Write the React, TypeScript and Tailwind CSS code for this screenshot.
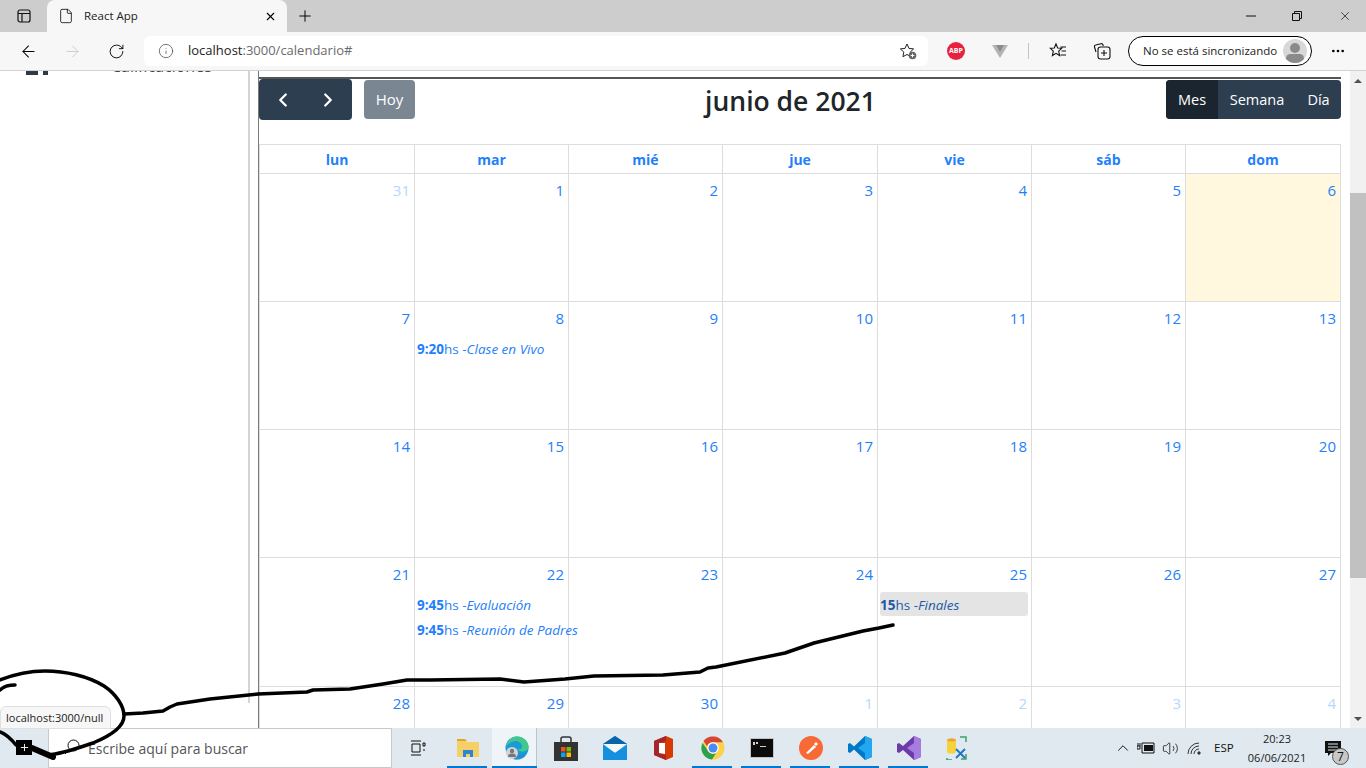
import { ArrowLeft, ArrowRight, ChevronLeft, ChevronRight, ChevronUp, File, Info, MoreHorizontal, Plus, RotateCw, Volume2, X } from 'lucide-react';

const font = { fontFamily: '"Open Sans", "Noto Sans", sans-serif' };

type Ev = { time: string; title: string; grey?: boolean };
type Day = { n: number; muted?: boolean; today?: boolean; events?: Ev[] };

const weeks: Day[][] = [
  [{ n: 31, muted: true }, { n: 1 }, { n: 2 }, { n: 3 }, { n: 4 }, { n: 5 }, { n: 6, today: true }],
  [{ n: 7 }, { n: 8, events: [{ time: '9:20', title: 'Clase en Vivo' }] }, { n: 9 }, { n: 10 }, { n: 11 }, { n: 12 }, { n: 13 }],
  [{ n: 14 }, { n: 15 }, { n: 16 }, { n: 17 }, { n: 18 }, { n: 19 }, { n: 20 }],
  [
    { n: 21 },
    { n: 22, events: [{ time: '9:45', title: 'Evaluación' }, { time: '9:45', title: 'Reunión de Padres' }] },
    { n: 23 },
    { n: 24 },
    { n: 25, events: [{ time: '15', title: 'Finales', grey: true }] },
    { n: 26 },
    { n: 27 },
  ],
  [{ n: 28 }, { n: 29 }, { n: 30 }, { n: 1, muted: true }, { n: 2, muted: true }, { n: 3, muted: true }, { n: 4, muted: true }],
];

const dayNames = ['lun', 'mar', 'mié', 'jue', 'vie', 'sáb', 'dom'];

const BrowserBar = () => (
  <div className="shrink-0 relative z-10">
    <div className="h-8 bg-[#cdcdcd] flex items-center">
      <div className="w-[47px] flex justify-center">
        <svg width="16" height="16" viewBox="0 0 16 16" fill="none" stroke="#111" strokeWidth="1.2">
          <rect x="2" y="2" width="12" height="12" rx="2" />
          <path d="M2 5.5h12M6 5.5V14" />
        </svg>
      </div>
      <div className="w-[240px] h-8 bg-[#f7f7f7] rounded-t-lg flex items-center pl-[11px] pr-[2px]">
        <File size={16} strokeWidth={1.2} className="text-black" />
        <span className="ml-[10px] text-[11.5px] text-[#222]">React App</span>
        <X size={13} strokeWidth={2} className="ml-auto mr-[8px] text-black" />
      </div>
      <Plus size={18} strokeWidth={1.3} className="ml-[9px] text-black" />
      <div className="ml-auto flex items-center text-black">
        <svg width="12" height="12" viewBox="0 0 12 12" className="mr-[34px]" stroke="#111">
          <path d="M1 6h10" />
        </svg>
        <svg width="12" height="12" viewBox="0 0 12 12" className="mr-[35px]" fill="none" stroke="#111">
          <path d="M1.5 3.5h7v7h-7zM3.5 3.5v-2h7v7h-2" />
        </svg>
        <X size={14} strokeWidth={1.1} className="mr-[14px]" />
      </div>
    </div>
    <div className="h-[39px] bg-[#f7f7f7] border-b border-[#d2d2d2] flex items-center">
      <ArrowLeft size={19} strokeWidth={1.3} className="ml-[19px] text-black" />
      <ArrowRight size={19} strokeWidth={1.1} className="ml-[25px] text-[#c8c8c8]" />
      <RotateCw size={17} strokeWidth={1.3} className="ml-[26px] text-black" />
      <div className="ml-[19px] w-[784px] h-[30px] bg-white rounded-md flex items-center">
        <Info size={16} strokeWidth={1.2} className="ml-[14px] text-[#555]" />
        <span className="ml-[14px] text-[13px] text-[#222]">
          localhost<span className="text-[#6b6b6b]">:3000/calendario#</span>
        </span>
        <svg width="18" height="18" viewBox="0 0 18 18" className="ml-auto mr-[11px]" fill="none" stroke="#222" strokeWidth="1">
          <path d="M8 2l2 4.4 4.6.5-3.4 3.2.9 4.6L8 12.5l-4.1 2.2.9-4.6L1.4 6.9 6 6.400z" />
          <circle cx="13.500" cy="13.500" r="3.800" fill="#666" stroke="none" />
          <path d="M11.700 13.500h3.600M13.500 11.700v3.600" stroke="#fff" />
        </svg>
      </div>
      <div className="ml-[19px] w-[18px] h-[18px] rounded-full bg-[#e8223e] flex items-center justify-center text-white font-bold text-[7px]">ABP</div>
      <svg width="16" height="16" viewBox="0 0 16 16" className="ml-[27px]">
        <path d="M0 2h16L8 15z" fill="#b4b4b4" />
        <path d="M4 2h8L8 9z" fill="#8c8c8c" />
      </svg>
      <div className="ml-[20px] w-[1px] h-[16px] bg-[#c4c4c4]" />
      <svg width="18" height="18" viewBox="0 0 18 18" className="ml-[20px]" fill="none" stroke="#111" strokeWidth="1.1">
        <path d="M7 2l1.700 4 4 .3-3 2.900.9 4.300L7 11.300l-3.600 2.200.9-4.300-3-2.900 4-.3zM11.500 5H17M12.500 9H17M11.500 13H17" />
      </svg>
      <svg width="18" height="18" viewBox="0 0 18 18" className="ml-[26px]" fill="none" stroke="#111" strokeWidth="1.1">
        <path d="M3 10L1.500 5c-.3-1 .2-1.800 1.200-2L8 1.700c1-.2 1.700.3 2 1.200l.3 1.100" />
        <rect x="5" y="5" width="12" height="12" rx="2.500" />
        <path d="M11 8v6M8 11h6" />
      </svg>
      <div className="ml-[17px] w-[184px] h-[30px] rounded-full border border-black flex items-center pl-[14px] pr-[4px] bg-white">
        <span className="text-[11.5px] text-[#222] whitespace-nowrap">No se está sincronizando</span>
        <div className="ml-auto w-[24px] h-[24px] rounded-full bg-[#d8d8d8] overflow-hidden flex flex-col items-center pt-[4px]">
          <div className="w-[10px] h-[10px] rounded-full bg-[#8a8a8a]" />
          <div className="w-[18px] h-[10px] rounded-full bg-[#8a8a8a] mt-[1px]" />
        </div>
      </div>
      <MoreHorizontal size={16} className="ml-[18px] text-black" />
    </div>
  </div>
);

const DayCell = ({ day }: { day: Day }) => (
  <div className={`min-w-0 border-r border-[#dddddd] ${day.today ? 'bg-[#fff8de]' : ''}`}>
    <div className={`text-right pr-[4px] pt-[5px] text-[15px] leading-[22px] ${day.muted ? 'text-[#b3d7ff]' : 'text-[#1f80fb]'}`}>{day.n}</div>
    {day.events ? (
      <div className="mt-[7px] flex flex-col gap-[1px] pl-[2px] pr-[3px]">
        {day.events.map((ev) => (
          <div
            key={ev.title}
            className={`h-[24px] pt-[2px] flex items-center rounded-[3px] text-[13.5px] whitespace-nowrap ${ev.grey ? 'bg-[#e4e4e4] text-[#1d5aa8]' : 'text-[#1f80fb]'}`}
          >
            <b>{ev.time}</b>hs -<i>{ev.title}</i>
          </div>
        ))}
      </div>
    ) : null}
  </div>
);

const Calendar = () => (
  <div className="flex-1 min-w-0 overflow-hidden">
    <div className="mt-[6px] w-[1082px] h-[2px] bg-[#555]" />
    <div className="w-[1082px] flex items-center h-[41px]">
      <div className="w-[93px] h-[41px] bg-[#2c3e50] rounded flex items-center justify-around px-[2px] text-white">
        <ChevronLeft size={22} strokeWidth={2.500} />
        <ChevronRight size={22} strokeWidth={2.500} />
      </div>
      <div className="ml-[12px] w-[51px] h-[39px] bg-[#7a8691] rounded flex items-center justify-center text-white text-[15px]">Hoy</div>
      <div className="flex-1 pt-[4px] text-center text-[26.500px] font-semibold text-[#212529]">junio de 2021</div>
      <div className="h-[39px] bg-[#2c3e50] rounded flex items-center text-white text-[14.500px] overflow-hidden">
        <span className="h-full w-[52px] flex items-center justify-center bg-[#1a252f]">Mes</span>
        <span className="w-[78px] text-center">Semana</span>
        <span className="w-[45px] text-center">Día</span>
      </div>
    </div>
    <div className="mt-[24px] w-[1082px] border-l border-t border-[#dddddd]">
      <div className="grid grid-cols-[155px_154px_154px_155px_154px_154px_155px] h-[29px] border-b border-[#dddddd]">
        {dayNames.map((d) => (
          <div key={d} className="border-r border-[#dddddd] text-center text-[14px] font-bold text-[#1f80fb] leading-[29px]">{d}</div>
        ))}
      </div>
      {weeks.map((week, i) => (
        <div key={i} className={`grid grid-cols-[155px_154px_154px_155px_154px_154px_155px] border-b border-[#dddddd] ${i === 3 ? 'h-[129px]' : 'h-[128px]'}`}>
          {week.map((day, j) => (
            <DayCell key={j} day={day} />
          ))}
        </div>
      ))}
    </div>
  </div>
);

const Scrollbar = () => (
  <div className="w-[16px] shrink-0 bg-[#f1f1f1] flex flex-col items-center relative">
    <div className="mt-[8px] w-0 h-0 border-x-[4px] border-x-transparent border-b-[4px] border-b-[#505050]" />
    <div className="absolute top-[122px] left-0 w-[16px] h-[385px] bg-[#c1c1c1]" />
    <div className="mt-auto mb-[7px] w-0 h-0 border-x-[4px] border-x-transparent border-t-[4px] border-t-[#505050]" />
  </div>
);

const Sidebar = () => (
  <div className="w-[259px] shrink-0 flex overflow-hidden">
    <div className="w-[248px] h-[632px] border-r-2 border-[#d4d4d4] box-content -mr-[2px]">
      <div className="flex items-start -mt-[12px] ml-[26px]">
        <div className="w-[22px] h-[16px] flex gap-[5px]">
          <div className="w-[12px] bg-[#2f3a45]" />
          <div className="w-[5px] bg-[#2f3a45]" />
        </div>
        <span className="ml-[63px] text-[16px] text-[#444] leading-[15px] whitespace-nowrap">Calificaciones</span>
      </div>
    </div>
    <div className="ml-auto w-[1px] bg-[#7a7a7a]" />
  </div>
);

const Underlined = ({ on, active, children }: { on?: boolean; active?: boolean; children: React.ReactNode }) => (
  <div className="w-[49px] h-full flex items-center justify-center relative">
    {active ? <div className="absolute inset-y-0 left-0 right-[4px] bg-[#eef4f7] border-r border-[#b9c4cb]" /> : null}
    <div className="relative flex">{children}</div>
    {on ? <div className={`absolute bottom-0 h-[2px] bg-[#0078d4] ${active ? 'left-0 right-[4px]' : 'left-[4px] right-[5px]'}`} /> : null}
  </div>
);

const Taskbar = () => (
  <div className="h-[40px] shrink-0 bg-[#dfe9ef] flex items-center relative z-10">
    <div className="w-[48px] h-full flex items-center justify-center">
      <svg width="16" height="16" viewBox="0 0 16 16">
        <path d="M1 1h6.500v6.500H1zM8.500 1H15v6.500H8.500zM1 8.500h6.500V15H1zM8.500 8.500H15V15H8.500z" fill="#111" />
      </svg>
    </div>
    <div className="w-[344px] h-full bg-white border border-[#c8c8c8] flex items-center pl-[15px]">
      <svg width="16" height="16" viewBox="0 0 16 16" fill="none" stroke="#111" className="-mt-[3px]">
        <circle cx="9.500" cy="6.500" r="5.500" />
        <path d="M5.500 10.500 1 15" />
      </svg>
      <span className="ml-[8px] text-[14px] text-[#555]">Escribe aquí para buscar</span>
    </div>
    <div className="w-[51px] flex justify-center">
      <svg width="16" height="16" viewBox="0 0 16 16" fill="none" stroke="#111">
        <path d="M1 1h10M1 15h10M2 4h8v8H2zM13 3h2v3h-2zM13 10h2" />
      </svg>
    </div>
    <Underlined on>
      <svg width="22" height="20" viewBox="0 0 22 20">
        <path d="M0 2h8l2 2h12v15H0z" fill="#f5d066" />
        <path d="M0 1h8l2 2H0z" fill="#e0a81e" />
        <path d="M6 12h10v7h-3v-3H9v3H6z" fill="#2b86d4" />
      </svg>
    </Underlined>
    <Underlined on active>
      <svg width="24" height="24" viewBox="0 0 24 24">
        <circle cx="12" cy="12" r="11.500" fill="#1a9ad8" />
        <path d="M12 .5c6 0 11.500 4.500 11.500 10.500 0 3-3 4.500-6 4.500-2 0-4-.5-5-2 3 0 4.500-1 4.500-3 0-3-3-5.500-6-5.500-4 0-8.500 3-10.500 6C2 5 6.500.5 12 .5z" fill="#42c88c" />
        <path d="M21 17c-2.500 5-8 7-12 6l2-5c3 1.500 7 1 10-1z" fill="#2b8ad0" />
        <circle cx="7" cy="17" r="6" fill="#d4d4d4" />
        <circle cx="7" cy="15" r="2.200" fill="#777" />
        <path d="M3 21c0-3 2-3.500 4-3.500s4 .5 4 3.500z" fill="#777" />
      </svg>
    </Underlined>
    <Underlined>
      <svg width="24" height="25" viewBox="0 0 24 25">
        <path d="M7 7V3a2 2 0 0 1 2-2h6a2 2 0 0 1 2 2v4" fill="none" stroke="#333" strokeWidth="1.500" />
        <path d="M0 6h24v19H0z" fill="#333" />
        <path d="M7 11h4.500v4.500H7z" fill="#f25022" />
        <path d="M12.500 11H17v4.500h-4.500z" fill="#7fba00" />
        <path d="M7 16.500h4.500V21H7z" fill="#00a4ef" />
        <path d="M12.500 16.500H17V21h-4.500z" fill="#ffb900" />
      </svg>
    </Underlined>
    <Underlined>
      <svg width="24" height="24" viewBox="0 0 24 24">
        <path d="M0 8l12-8 12 8v16H0z" fill="#28a8ea" />
        <path d="M0 8l12-8 12 8-12 8z" fill="#0a64a8" />
        <path d="M0 8h24l-12 9z" fill="#f4f8fa" />
        <path d="M0 24V9l12 8 12-8v15z" fill="#1490df" />
      </svg>
    </Underlined>
    <Underlined>
      <svg width="20" height="24" viewBox="0 0 20 24">
        <path d="M0 5l12-5 7 3v18l-7 3-12-5z" fill="#d83b01" />
        <path d="M0 5l12-5v5L5 7v10l7 2v5L0 19z" fill="#a4262c" />
        <path d="M5 7h6v11L5 17z" fill="#fff" />
      </svg>
    </Underlined>
    <Underlined on>
      <svg width="24" height="24" viewBox="0 0 24 24">
        <circle cx="12" cy="12" r="11.500" fill="#fbd34a" />
        <path d="M12 .5a11.500 11.500 0 0 1 10 5.800H12a6 6 0 0 0-6 4L2.500 5A11.500 11.500 0 0 1 12 .5z" fill="#d94438" />
        <path d="M1.500 7A11.500 11.500 0 0 0 11 23.500l4-6.500a6 6 0 0 1-8.500-3z" fill="#2e9e4f" />
        <circle cx="12" cy="12" r="5.800" fill="#fff" />
        <circle cx="12" cy="12" r="4.500" fill="#4a8bf0" />
      </svg>
    </Underlined>
    <Underlined on>
      <svg width="24" height="20" viewBox="0 0 24 20">
        <path d="M0 0h24v20H0z" fill="#c4c4c4" />
        <path d="M1 1h22v18H1z" fill="#0c0c0c" />
        <path d="M3 4h2v3H3zM6 4h2v2H6zM10 8h6v1h-6z" fill="#cfcfcf" />
      </svg>
    </Underlined>
    <Underlined on>
      <svg width="24" height="24" viewBox="0 0 24 24">
        <circle cx="12" cy="12" r="12" fill="#f76935" />
        <path d="M7 17l8-8 2 2-8 7zM15 8l2-2 2 2-2 2z" fill="#fff" />
      </svg>
    </Underlined>
    <Underlined on>
      <svg width="24" height="24" viewBox="0 0 24 24">
        <path d="M17 0l7 3v18l-7 3L6 13.500 2 17l-2-1V8l2-1 4 3.500z" fill="#0078c8" />
        <path d="M17 0l7 3v18l-7 3zM17 7l-7 5 7 5z" fill="#22a7f0" />
      </svg>
    </Underlined>
    <Underlined on>
      <svg width="24" height="24" viewBox="0 0 24 24">
        <path d="M17 0l7 3v18l-7 3L6 14 2 17l-2-1V8l2-1 4 3z" fill="#6d3ba8" />
        <path d="M17 0l7 3v18l-7 3zM17 7l-7 5 7 5z" fill="#a67cde" />
      </svg>
    </Underlined>
    <Underlined>
      <svg width="24" height="24" viewBox="0 0 24 24">
        <path d="M1 4c0-2 9-2 9 0v12c0 2-9 2-9 0z" fill="#f6d33c" />
        <path d="M1 4c0-2 9-2 9 0s-9 2-9 0z" fill="#e9a43c" />
        <path d="M14 1h6v5M1 22v2h5M20 18v5h-5" fill="none" stroke="#38a169" strokeWidth="1.500" />
        <path d="M10 13l9 9M19 13l-9 9" stroke="#2276c8" strokeWidth="2" />
      </svg>
    </Underlined>
    <div className="ml-auto flex items-center h-full text-[#111] mr-[25px]">
      <ChevronUp size={18} strokeWidth={1.300} />
      <svg width="18" height="12" viewBox="0 0 18 12" className="ml-[5px]">
        <path d="M5 1h12v10H5zM0 4h3v3H0zM1 1v3M3 1v3" fill="none" stroke="#111" />
        <path d="M7 3h9v6H7z" fill="#111" />
      </svg>
      <Volume2 size={17} strokeWidth={1.100} className="ml-[7px]" />
      <svg width="16" height="14" viewBox="0 0 16 14" className="ml-[8px]" fill="none" stroke="#333">
        <path d="M1 13a11 11 0 0 1 11-11M4 13a8 8 0 0 1 8-8M7 13a5 5 0 0 1 5-5" />
        <circle cx="12" cy="12" r="1.200" fill="#333" />
      </svg>
      <span className="ml-[11px] text-[11.5px] w-[20px] whitespace-nowrap">ESP</span>
      <div className="ml-[10px] w-[66px] text-center text-[11px] leading-[19px] text-[#222]">
        <div>20:23</div>
        <div>06/06/2021</div>
      </div>
      <div className="ml-[15px] relative w-[16px] h-[20px]">
        <svg width="16" height="16" viewBox="0 0 16 16" className="block mt-[3px]">
          <path d="M0 0h16v12H6l-3 3v-3H0z" fill="#111" />
          <path d="M3 3h10M3 6h10M3 9h10" stroke="#dfe9ef" />
        </svg>
        <div className="absolute left-[7px] top-[10px] w-[17px] h-[17px] rounded-full bg-[#c8c8c8] border border-[#555] text-[12px] leading-[15px] text-center">7</div>
      </div>
    </div>
  </div>
);

const App = () => (
  <div className="h-screen w-[1366px] overflow-hidden flex flex-col bg-white relative" style={font}>
    <BrowserBar />
    <div className="flex-1 min-h-0 flex overflow-hidden">
      <Sidebar />
      <Calendar />
      <Scrollbar />
    </div>
    <Taskbar />
    {/* status tooltip of the link being hovered */}
    <div className="absolute left-0 top-[706px] h-[23px] pl-[5px] pr-[7px] bg-[#f7f7f7] border border-[#e0e0e0] rounded-t-md text-[11px] leading-[21px] text-[#222] z-20">localhost:3000/null</div>
    {/* hand drawn marker over the capture */}
    <svg className="absolute inset-0 z-30 pointer-events-none" width="1366" height="768" fill="none" stroke="#000" strokeWidth="3.500" strokeLinecap="round" strokeLinejoin="round">
      <path d="M893 625 879 628 863 631 814 643 785 653 716 667 708 668 700 672 663 675 594 676 565 679 524 682 500 679 430 680 407 680 383 684 350 689 313 690 307 692 258 694 210 699 177 704 170 707 163 711 143 713 124 714" />
      <path d="M0 680 C10 676 28 671 45 671 C65 671 88 676 104 686 C116 694 124 706 124 716 C124 727 110 736 93 743 C78 748 62 754 48 755" />
      <path d="M0 690 C4 686 9 685 15 685" />
      <path d="M0 732 C6 734 11 739 16 745" />
      <path d="M32 748 53 757" strokeWidth="6" />
    </svg>
    <div className="absolute left-[16px] top-[740px] w-[16px] h-[15px] bg-black z-30 flex items-center justify-center">
      <Plus size={11} strokeWidth={2} className="text-white" />
    </div>
  </div>
);

export default App;
